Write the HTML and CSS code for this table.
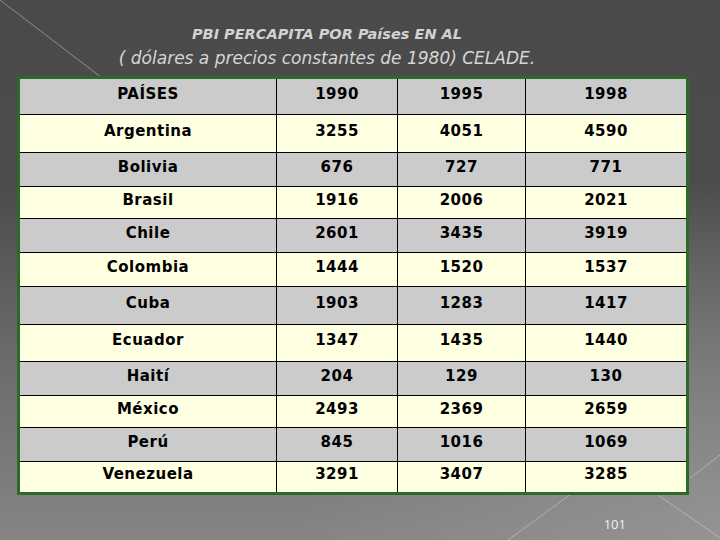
FILE: index.html
```html
<!DOCTYPE html>
<html lang="es">
<head>
<meta charset="utf-8">
<title>PBI PERCAPITA POR Países EN AL</title>
<link rel="stylesheet" href="styles.css">
</head>
<body>
<div class="slide">
  <svg class="decor" width="720" height="540" viewBox="0 0 720 540" aria-hidden="true">
    <line x1="0" y1="0" x2="110" y2="84"/>
    <line x1="508" y1="540" x2="600" y2="473"/>
    <line x1="690" y1="478" x2="720" y2="455"/>
    <line x1="658" y1="495" x2="720" y2="538"/>
  </svg>
  <div class="content">
    <header class="title">
      <div class="title-main">PBI PERCAPITA POR Países EN AL</div>
      <div class="title-sub">( dólares a precios constantes de 1980) CELADE.</div>
    </header>
    <table class="data">
      <colgroup>
        <col class="c1"><col class="c2"><col class="c3"><col class="c4">
      </colgroup>
      <thead>
        <tr><th>PAÍSES</th><th>1990</th><th>1995</th><th>1998</th></tr>
      </thead>
      <tbody>
        <tr><td>Argentina</td><td>3255</td><td>4051</td><td>4590</td></tr>
        <tr><td>Bolivia</td><td>676</td><td>727</td><td>771</td></tr>
        <tr><td>Brasil</td><td>1916</td><td>2006</td><td>2021</td></tr>
        <tr><td>Chile</td><td>2601</td><td>3435</td><td>3919</td></tr>
        <tr><td>Colombia</td><td>1444</td><td>1520</td><td>1537</td></tr>
        <tr><td>Cuba</td><td>1903</td><td>1283</td><td>1417</td></tr>
        <tr><td>Ecuador</td><td>1347</td><td>1435</td><td>1440</td></tr>
        <tr><td>Haití</td><td>204</td><td>129</td><td>130</td></tr>
        <tr><td>México</td><td>2493</td><td>2369</td><td>2659</td></tr>
        <tr><td>Perú</td><td>845</td><td>1016</td><td>1069</td></tr>
        <tr><td>Venezuela</td><td>3291</td><td>3407</td><td>3285</td></tr>
      </tbody>
    </table>
    <footer class="pagenum">101</footer>
  </div>
</div>
</body>
</html>
```

FILE: styles.css
```css
html, body {
  margin: 0;
  padding: 0;
}

body {
  width: 720px;
  height: 540px;
  overflow: hidden;
  font-family: "DejaVu Sans", "Open Sans", sans-serif;
}

.slide {
  position: relative;
  width: 720px;
  height: 540px;
  overflow: hidden;
  background:
    radial-gradient(ellipse 420px 360px at 100% 100%, rgba(160,160,160,0.55) 0%, rgba(160,160,160,0) 100%),
    linear-gradient(to bottom, #4a4a4a 0%, #4c4c4c 35%, #6a6a6a 65%, #858585 100%);
}

.decor {
  position: absolute;
  left: 0;
  top: 0;
  z-index: 0;
}

.decor line {
  stroke: rgba(225, 225, 225, 0.45);
  stroke-width: 1;
}

.content {
  position: relative;
  z-index: 1;
}

.title {
  padding: 22px 66px 0 0;
  text-align: center;
  font-family: "DejaVu Sans", "Open Sans", sans-serif;
}

.title-main {
  font-size: 14.5px;
  line-height: 24px;
  font-weight: bold;
  font-style: italic;
  color: #d2d2d2;
}

.title-sub {
  font-size: 17px;
  line-height: 24px;
  font-weight: 200;
  font-style: italic;
  color: #d6d6d6;
}

.data {
  margin: 6px 0 0 17px;
  width: 672px;
  table-layout: fixed;
  border-collapse: separate;
  border-spacing: 0;
  border: 3px solid #2c6b27;
}

.c1 { width: 256px; }
.c2 { width: 121px; }
.c3 { width: 128px; }
.c4 { width: 161px; }

.data th,
.data td {
  box-sizing: border-box;
  padding: 0 0 6px;
  text-align: center;
  vertical-align: middle;
  font-family: "DejaVu Sans", Verdana, sans-serif;
  font-size: 15px;
  font-weight: bold;
  letter-spacing: 0.5px;
  color: #000;
  border-left: 1px solid #000;
  border-top: 1px solid #000;
}

.data th:first-child,
.data td:first-child {
  border-left: none;
}

.data thead th {
  border-top: none;
}

.data thead tr { height: 35px; background: #cbcbcb; }

.data tbody tr:nth-child(odd) { background: #ffffe1; }
.data tbody tr:nth-child(even) { background: #cbcbcb; }

.data tbody tr:nth-child(1) { height: 38px; }
.data tbody tr:nth-child(2) { height: 34px; }
.data tbody tr:nth-child(3) { height: 32px; }
.data tbody tr:nth-child(4) { height: 34px; }
.data tbody tr:nth-child(5) { height: 34px; }
.data tbody tr:nth-child(6) { height: 38px; }
.data tbody tr:nth-child(7) { height: 37px; }
.data tbody tr:nth-child(8) { height: 34px; }
.data tbody tr:nth-child(9) { height: 32px; }
.data tbody tr:nth-child(10) { height: 34px; }
.data tbody tr:nth-child(11) { height: 31px; }

.pagenum {
  margin-top: 21px;
  padding-right: 94px;
  text-align: right;
  font-family: "Open Sans", "DejaVu Sans", sans-serif;
  font-size: 13px;
  line-height: 16px;
  color: #f2f2f2;
}
```
